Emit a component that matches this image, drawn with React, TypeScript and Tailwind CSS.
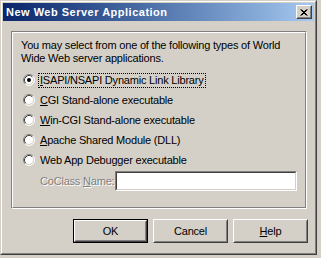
import React from "react";

function Radio({ checked }: { checked?: boolean }) {
  return (
    <svg width="12" height="12" viewBox="0 0 12 12" className="shrink-0">
      <circle cx="6" cy="6" r="5" fill="#ffffff" />
      <path d="M2.11 9.89 A5.5 5.5 0 0 1 9.89 2.11" fill="none" stroke="#808080" strokeWidth="1" />
      <path d="M9.89 2.11 A5.5 5.5 0 0 1 2.11 9.89" fill="none" stroke="#ffffff" strokeWidth="1" />
      <path d="M2.82 9.18 A4.5 4.5 0 0 1 9.18 2.82" fill="none" stroke="#404040" strokeWidth="1" />
      <path d="M9.18 2.82 A4.5 4.5 0 0 1 2.82 9.18" fill="none" stroke="#d4d0c8" strokeWidth="1" />
      {checked && <circle cx="6" cy="6" r="2" fill="#000000" />}
    </svg>
  );
}

function Btn({ children, def }: { children: React.ReactNode; def?: boolean }) {
  const inner = (
    <div className="flex-1 flex border border-t-white border-l-white border-r-[#404040] border-b-[#404040]">
      <div className="flex-1 flex items-center justify-center border border-t-[#d4d0c8] border-l-[#d4d0c8] border-r-[#808080] border-b-[#808080] text-black">
        {children}
      </div>
    </div>
  );
  return (
    <div className={"w-[75px] h-[24px] flex " + (def ? "border border-black" : "")}>
      {inner}
    </div>
  );
}

function Option({ label, checked, focus }: { label: React.ReactNode; checked?: boolean; focus?: boolean }) {
  return (
    <div className="h-[20px] flex items-center pl-[10px]">
      <Radio checked={checked} />
      <div
        className={
          "ml-[3px] h-[15px] flex items-center px-[1px] whitespace-nowrap " +
          (focus ? "border border-dotted border-black" : "border border-transparent")
        }
      >
        {label}
      </div>
    </div>
  );
}

export default function App() {
  return (
    <div
      className="w-[321px] h-[258px] bg-[#d4d0c8] text-[11px] leading-[13px] tracking-[-0.2px] text-black overflow-hidden"
      style={{ fontFamily: '"Liberation Sans", Arial, sans-serif' }}
    >
      <div className="w-[317px] h-[255px] border border-t-[#d4d0c8] border-l-[#d4d0c8] border-r-[#404040] border-b-[#404040]">
        <div className="w-full h-full border border-t-white border-l-white border-r-[#808080] border-b-[#808080] p-[1px] flex flex-col">
          {/* Title bar */}
          <div className="h-[18px] shrink-0 flex items-center pl-[3px] pr-[2px] bg-gradient-to-r from-[#0a246a] to-[#a6caf0]">
            <div className="flex-1 text-white font-bold text-[11px] tracking-[0.5px]">New Web Server Application</div>
            <div className="w-[16px] h-[14px] flex border border-t-white border-l-white border-r-[#404040] border-b-[#404040] bg-[#d4d0c8]">
              <div className="flex-1 flex items-center justify-center border border-t-[#d4d0c8] border-l-[#d4d0c8] border-r-[#808080] border-b-[#808080]">
                <svg width="8" height="7" viewBox="0 0 8 7">
                  <path d="M0.5 0.5 L6.5 6.5 M1.5 0.5 L7.5 6.5 M6.5 0.5 L0.5 6.5 M7.5 0.5 L1.5 6.5" stroke="#000" strokeWidth="1" />
                </svg>
              </div>
            </div>
          </div>
          {/* Client */}
          <div className="flex-1 flex flex-col pl-[8px] pr-[7px] pt-[10px]">
            <div className="h-[178px] border border-t-[#808080] border-l-[#808080] border-r-white border-b-white">
              <div className="h-full border border-t-white border-l-white border-r-[#808080] border-b-[#808080] pl-[8px] pt-[6px]">
                <div className="w-[276px]">
                  You may select from one of the following types of World Wide Web server applications.
                </div>
                <div className="mt-[5px] -ml-[8px] flex flex-col">
                  <Option
                    checked
                    focus
                    label={
                      <span>
                        <span className="underline">I</span>SAPI/NSAPI Dynamic Link Library
                      </span>
                    }
                  />
                  <Option
                    label={
                      <span>
                        <span className="underline">C</span>GI Stand-alone executable
                      </span>
                    }
                  />
                  <Option
                    label={
                      <span>
                        <span className="underline">W</span>in-CGI Stand-alone executable
                      </span>
                    }
                  />
                  <Option
                    label={
                      <span>
                        <span className="underline">A</span>pache Shared Module (DLL)
                      </span>
                    }
                  />
                  <Option label={<span>Web App Debugger executable</span>} />
                  <div className="mt-[1px] h-[20px] flex items-center pl-[27px]">
                    <div
                      className="w-[75px] text-[#808080] whitespace-nowrap"
                      style={{ textShadow: "1px 1px 0 #ffffff" }}
                    >
                      CoClass <span className="underline">N</span>ame:
                    </div>
                    <div className="w-[182px] h-[20px] flex border border-t-[#808080] border-l-[#808080] border-r-white border-b-white">
                      <div className="flex-1 bg-white border border-t-[#404040] border-l-[#404040] border-r-[#d4d0c8] border-b-[#d4d0c8]" />
                    </div>
                  </div>
                </div>
              </div>
            </div>
            <div className="mt-[10px] flex justify-end gap-[5px] -mr-[1px]">
              <Btn def>OK</Btn>
              <Btn>Cancel</Btn>
              <Btn>
                <span>
                  <span className="underline">H</span>elp
                </span>
              </Btn>
            </div>
          </div>
        </div>
      </div>
    </div>
  );
}
